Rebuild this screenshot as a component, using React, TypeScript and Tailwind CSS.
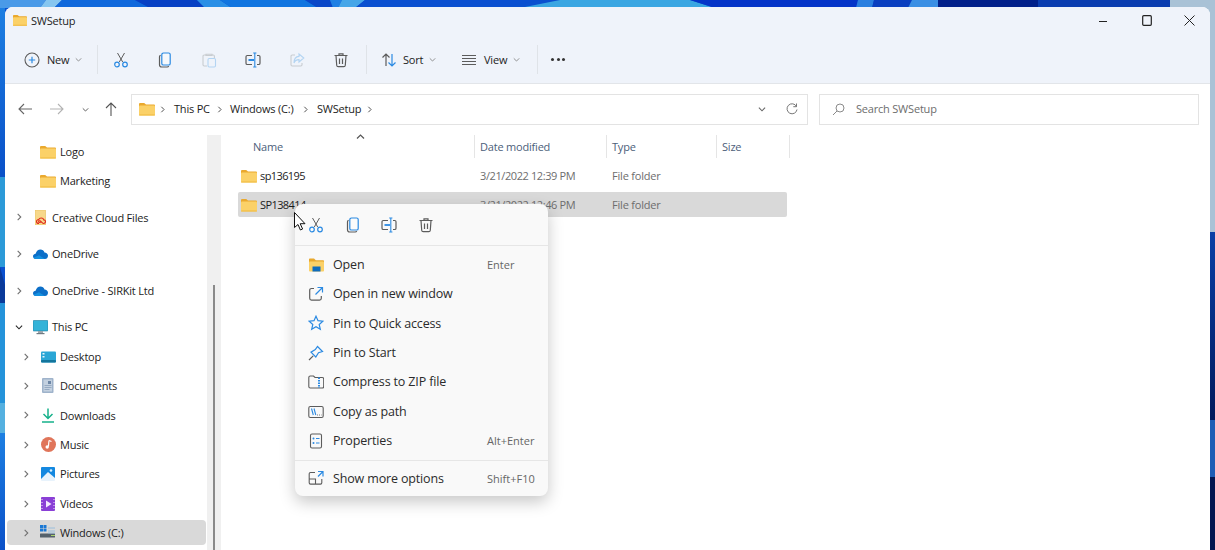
import type { ReactNode } from "react";

const BLUE = "#2b8ae2";
const GRAY = "#5c5c5c";

function Svg({ size = 16, children, className }: { size?: number; children: ReactNode; className?: string }) {
  return (
    <svg width={size} height={size} viewBox="0 0 16 16" fill="none" strokeWidth="1" className={className}>
      {children}
    </svg>
  );
}

function Folder({ w = 16 }: { w?: number }) {
  return (
    <svg width={w} height={(w * 14) / 16} viewBox="0 0 16 14" className="shrink-0">
      <path d="M0 2a1 1 0 0 1 1-1h4.2l1.8 1.6h8a1 1 0 0 1 1 1V6H0z" fill="#eaa92e" />
      <rect x="0" y="3.6" width="16" height="9.9" rx="1" fill="#fbd168" />
      <rect x="0" y="12.4" width="16" height="1.1" rx=".5" fill="#f0b93f" />
    </svg>
  );
}

function Chevron({ dir = "right", color = "#6f6f6f", size = 8 }: { dir?: "right" | "down" | "up"; color?: string; size?: number }) {
  const d = dir === "right" ? "M3 1l3.5 3.5L3 8" : dir === "down" ? "M1 3l3.5 3.5L8 3" : "M1 6.5L4.5 3 8 6.5";
  return (
    <svg width={size} height={size} viewBox="0 0 9 9" fill="none" stroke={color} strokeWidth="1.2">
      <path d={d} />
    </svg>
  );
}

function Cut({ size = 16 }: { size?: number }) {
  return (
    <Svg size={size}>
      <path d="M4.5 1l5.2 9M11.5 1L6.3 10" stroke={GRAY} />
      <circle cx="4" cy="12.5" r="2.3" stroke={BLUE} strokeWidth="1.2" />
      <circle cx="12" cy="12.5" r="2.3" stroke={BLUE} strokeWidth="1.2" />
    </Svg>
  );
}

function Copy({ size = 16 }: { size?: number }) {
  return (
    <Svg size={size}>
      <path d="M3.6 3.2C2.8 3.5 2.5 4 2.5 4.8v8c0 1.2.9 2.2 2.2 2.2h5.5c.7 0 1.2-.3 1.5-.9" stroke={GRAY} strokeWidth="1.2" />
      <rect x="4.8" y="1" width="8.4" height="12" rx="1.6" stroke={BLUE} strokeWidth="1.2" fill="#fff" fillOpacity=".4" />
    </Svg>
  );
}

function Paste() {
  return (
    <Svg>
      <path d="M5 3H3.2C2.5 3 2 3.5 2 4.2v8.6c0 .7.5 1.2 1.2 1.2H6" stroke="#c8ccd0" strokeWidth="1.1" />
      <path d="M5 3.5V2.2h6v1.3zM11 3h1.2c.7 0 1.2.5 1.2 1.2V6" stroke="#c8ccd0" strokeWidth="1.1" />
      <rect x="7" y="6.5" width="7.5" height="8.5" rx="1.2" stroke="#b3d4f2" strokeWidth="1.1" />
    </Svg>
  );
}

function Rename({ size = 16 }: { size?: number }) {
  return (
    <Svg size={size}>
      <path d="M7 3.5H2.3C1.5 3.5 1 4 1 4.8v6.4c0 .8.5 1.3 1.3 1.3H7M12 3.5h1.7c.8 0 1.3.5 1.3 1.3v6.4c0 .8-.5 1.3-1.3 1.3H12" stroke={GRAY} strokeWidth="1.2" />
      <path d="M3.5 8h5.5" stroke={BLUE} strokeWidth="1.8" />
      <path d="M9.8 1v14M8.2 1h3.2M8.2 15h3.2" stroke={BLUE} strokeWidth="1.1" />
    </Svg>
  );
}

function Share() {
  return (
    <Svg>
      <path d="M6 3H3.2C2.5 3 2 3.5 2 4.2v8.6c0 .7.5 1.2 1.2 1.2h8.6c.7 0 1.2-.5 1.2-1.2V11" stroke="#c8ccd0" strokeWidth="1.1" />
      <path d="M10 2l4.8 4L10 10V7.6C7.5 7.6 5.8 8.6 5 11c0-4 2-6.4 5-6.6z" stroke="#b3d4f2" strokeWidth="1.1" />
    </Svg>
  );
}

function Trash({ size = 16 }: { size?: number }) {
  return (
    <Svg size={size}>
      <path d="M1.5 3.5h13M6 3.5V1.8h4v1.7M3 3.5l.7 9.8c.1.9.6 1.4 1.5 1.4h5.6c.9 0 1.4-.5 1.5-1.4l.7-9.8" stroke={GRAY} strokeWidth="1.2" />
      <path d="M6.5 6.5v5.5M9.5 6.5v5.5" stroke={GRAY} strokeWidth="1.2" />
    </Svg>
  );
}

function Desktop() {
  return (
    <svg width="15" height="12" viewBox="0 0 15 12">
      <rect width="15" height="11" y=".5" rx="1" fill="#2aa6d6" />
      <rect width="15" height="2.5" y="9" rx="1" fill="#13759c" />
      <rect x="1.5" y="2" width="2" height="1.5" fill="#e6f6fb" />
      <rect x="1.5" y="5" width="2" height="1.5" fill="#e6f6fb" />
    </svg>
  );
}

function Cloud() {
  return (
    <svg width="15" height="10" viewBox="0 0 15 10">
      <path d="M3 10C1.2 10 0 8.8 0 7.3 0 5.8 1.2 4.8 2.6 4.7 3.3 2 5.3.5 7.4.5c2 0 3.6 1.2 4.1 3 1.9 0 3.5 1.4 3.5 3.2C15 8.7 13.6 10 12 10z" fill="#0c6fc8" />
      <path d="M3 10c-1 0-2-.5-2.5-1.3L6 6.300 12 9.900z" fill="#1490df" />
    </svg>
  );
}

function CreativeCloud() {
  return (
    <svg width="11" height="15" viewBox="0 0 11 15">
      <rect width="10.5" height="15" fill="#f7d88a" stroke="#e5bb58" strokeWidth=".6" />
      <path d="M4 13.5c-1.5 0-2.5-.8-2.5-2s1-2 2.2-1.9c.5-1.1 1.4-1.6 2.5-1.6 1.3 0 2.3.8 2.6 1.9 1 .1 1.7.8 1.7 1.7 0 1.1-.9 1.900-2 1.900-1.700 0-2.500-2.800-3.800-2.800-.7 0-1.100.4-1.100.9s.4.9 1 .9c.4 0 .7-.1 1-.4" fill="none" stroke="#e0261c" strokeWidth="1.1" />
    </svg>
  );
}

function Monitor() {
  return (
    <svg width="15" height="15" viewBox="0 0 15 15">
      <rect y=".5" width="15" height="10.5" rx=".8" fill="#34b3d8" stroke="#1b7a9e" strokeWidth=".6" />
      <rect x="5" y="11" width="5" height="2" fill="#9aa5ad" />
      <rect x="3.5" y="13" width="8" height="1.2" fill="#6f7a82" />
    </svg>
  );
}

function Documents() {
  return (
    <svg width="12" height="15" viewBox="0 0 12 15">
      <rect width="11.5" height="15" rx="1" fill="#9fb3cb" />
      <rect x="1.5" y="1.5" width="8.5" height="12" fill="#c4d1e0" />
      <rect x="6" y="3" width="3" height="3" fill="#6e87a6" />
      <path d="M2.5 7.5h7M2.5 9.5h7M2.5 11.5h5" stroke="#8aa0ba" strokeWidth=".8" />
    </svg>
  );
}

function Downloads() {
  return (
    <svg width="12" height="15" viewBox="0 0 12 15" fill="none" stroke="#16b18a" strokeWidth="1.5">
      <path d="M6 .5V10M1.5 6L6 10.5 10.5 6M0 14h12" />
    </svg>
  );
}

function Music() {
  return (
    <svg width="15" height="15" viewBox="0 0 15 15">
      <circle cx="7.5" cy="7.5" r="7.5" fill="#e0755a" />
      <path d="M8 3.5l-.6 6" stroke="#fff" strokeWidth="1.2" />
      <circle cx="6.2" cy="10" r="1.7" fill="#fff" />
      <path d="M8 3.5l2.5 1" stroke="#fff" strokeWidth="1.2" />
    </svg>
  );
}

function Pictures() {
  return (
    <svg width="14" height="14" viewBox="0 0 14 14">
      <rect width="14" height="14" rx="1" fill="#1488e0" />
      <path d="M0 12l7-7 7 6v3H0z" fill="#ffffff" fillOpacity=".9" />
      <circle cx="10" cy="3.5" r="1.3" fill="#d6efff" />
    </svg>
  );
}

function Videos() {
  return (
    <svg width="14" height="14" viewBox="0 0 14 14">
      <rect width="14" height="14" rx="1" fill="#8a3fd6" />
      <path d="M5 3.5v7L10.5 7z" fill="#f4e9ff" />
      <path d="M1 2v1M1 5v1M1 8v1M1 11v1M13 2v1M13 5v1M13 8v1M13 11v1" stroke="#e2ccf7" strokeWidth="1.2" />
    </svg>
  );
}

function Drive() {
  return (
    <svg width="16" height="15" viewBox="0 0 16 15">
      <rect x="0" y="0" width="3" height="3" fill="#1a78d4" />
      <rect x="3.5" y="0" width="3" height="3" fill="#1a78d4" />
      <rect x="0" y="3.5" width="3" height="3" fill="#1a78d4" />
      <rect x="3.5" y="3.5" width="3" height="3" fill="#1a78d4" />
      <rect x="0" y="8.5" width="15" height="4" rx=".5" fill="#55616b" />
      <path d="M8 3h7M8 6h7M8 8h7" stroke="#8ab8dd" strokeWidth=".8" />
      <rect x="11" y="10" width="4" height="1" fill="#a9d36b" />
    </svg>
  );
}

const menuItems: { label: string; hint?: string; icon: ReactNode }[] = [
  {
    label: "Open",
    hint: "Enter",
    icon: (
      <svg width="15" height="14" viewBox="0 0 15 14">
        <path d="M0 1.5C0 .8.5.5 1 .5h4l1.800 1.800H14c.6 0 1 .4 1 1V5H0z" fill="#e8a82d" />
        <rect y="3.5" width="15" height="10" rx=".8" fill="#fbd168" />
        <rect x="3.5" y="8.5" width="8" height="5" fill="#0f6cbd" />
      </svg>
    ),
  },
  {
    label: "Open in new window",
    icon: (
      <Svg>
        <path d="M6 2.5H3.5c-1 0-1.800.8-1.800 1.800v8c0 1 .8 1.800 1.800 1.800h8c1 0 1.800-.8 1.800-1.800V10" stroke={GRAY} strokeWidth="1.2" />
        <path d="M9.5 1.5h5v5M14.5 1.5L7.5 8.5" stroke={BLUE} strokeWidth="1.2" />
      </Svg>
    ),
  },
  {
    label: "Pin to Quick access",
    icon: (
      <Svg>
        <path d="M8 1.2l2 4.500 4.900.5-3.700 3.300 1.100 4.800L8 11.800 3.700 14.300l1.100-4.800L1.100 6.200 6 5.700z" stroke={BLUE} strokeWidth="1.2" />
      </Svg>
    ),
  },
  {
    label: "Pin to Start",
    icon: (
      <Svg>
        <path d="M9.5 1.5l5 5-4 1.200-2.700 4.300-4.800-4.800 4.300-2.700z" stroke={BLUE} strokeWidth="1.2" />
        <path d="M5.2 10.800L1 15" stroke={GRAY} strokeWidth="1.2" />
      </Svg>
    ),
  },
  {
    label: "Compress to ZIP file",
    icon: (
      <Svg>
        <path d="M.8 3.5c0-1 .6-1.500 1.500-1.500h3.200l1.500 1.500h7.200c1 0 1.500.6 1.500 1.500v7.500c0 1-.6 1.500-1.500 1.500H2.300c-1 0-1.500-.6-1.500-1.500z" stroke={GRAY} strokeWidth="1.1" />
        <path d="M11 3.5V14" stroke={BLUE} strokeWidth="2" strokeDasharray="1.5 1" />
      </Svg>
    ),
  },
  {
    label: "Copy as path",
    icon: (
      <Svg>
        <rect x=".8" y="2.5" width="14.4" height="11" rx="1.5" stroke={GRAY} strokeWidth="1.1" />
        <path d="M3.5 4.5l1.800 6.500M6 4.500l1.800 6.500" stroke={BLUE} strokeWidth="1.1" />
        <path d="M9 11h.8M11 11h.8M13 11h.5" stroke={GRAY} strokeWidth="1" />
      </Svg>
    ),
  },
  {
    label: "Properties",
    hint: "Alt+Enter",
    icon: (
      <Svg>
        <rect x="2.5" y="1" width="11" height="14" rx="1.5" stroke={GRAY} strokeWidth="1.1" />
        <circle cx="5.5" cy="5.5" r="1" fill={BLUE} />
        <circle cx="5.5" cy="10" r="1" fill={BLUE} />
        <path d="M8 5.5h3.5M8 10h3.5" stroke={BLUE} strokeWidth="1.1" />
      </Svg>
    ),
  },
];

const navItems = [
  { label: "Desktop", icon: <Desktop /> },
  { label: "Documents", icon: <Documents /> },
  { label: "Downloads", icon: <Downloads /> },
  { label: "Music", icon: <Music /> },
  { label: "Pictures", icon: <Pictures /> },
  { label: "Videos", icon: <Videos /> },
];

function TopNode({ label, icon, open }: { label: string; icon: ReactNode; open?: boolean }) {
  return (
    <div className="flex h-[29.4px] shrink-0 items-center">
      <div className="flex w-[24px] justify-center">
        <Chevron dir={open ? "down" : "right"} color={open ? "#222" : "#6f6f6f"} />
      </div>
      <div className="flex w-[19px] justify-center">{icon}</div>
      <span className="ml-[2px] whitespace-nowrap pt-px text-[#1c1c1c]">{label}</span>
    </div>
  );
}

function SubNode({ label, icon, selected, arrow = true }: { label: string; icon: ReactNode; selected?: boolean; arrow?: boolean }) {
  return (
    <div className="flex h-[29.4px] shrink-0 items-center">
      <div className={`flex h-[25px] w-full items-center rounded-[4px] ${selected ? "bg-[#d9d9d9]" : ""}`}>
        <div className="flex w-[33px] justify-center pl-[5px]">{arrow && <Chevron />}</div>
        <div className="flex w-[16px] justify-center">{icon}</div>
        <span className="ml-[4px] whitespace-nowrap pt-px text-[#1c1c1c]">{label}</span>
      </div>
    </div>
  );
}

function Row({ name, date, selected }: { name: string; date: string; selected?: boolean }) {
  return (
    <div className={`mb-[4px] grid h-[25px] w-[549px] grid-cols-[236px_132px_110px_71px] items-center rounded-[2px] ${selected ? "bg-[#d9d9d9]" : ""}`}>
      <div className="flex items-center pl-[3px]">
        <Folder />
        <span className="ml-[3px] pt-px tracking-[-0.6px] text-[#1c1c1c]">{name}</span>
      </div>
      <span className="pl-[6px] pt-px tracking-[-0.4px] text-[#6d6d6d]">{date}</span>
      <span className="pl-[6px] pt-px text-[#6d6d6d]">File folder</span>
      <span />
    </div>
  );
}

function MenuRow({ icon, label, hint }: { icon: ReactNode; label: string; hint?: string }) {
  return (
    <div className="flex h-[29.4px] items-center">
      <div className="flex w-[42px] justify-center">{icon}</div>
      <span className="ml-[-4px] w-[154px] whitespace-nowrap pt-px text-[12.5px] tracking-[-0.15px] text-[#2b2b2b]">{label}</span>
      {hint && <span className="whitespace-nowrap pt-px text-[11px] tracking-normal text-[#666]">{hint}</span>}
    </div>
  );
}

export default function App() {
  return (
    <div className="relative h-[550px] w-[1215px] overflow-hidden bg-[#0a50cf] pl-[5px] pt-[7px] font-['Open_Sans',sans-serif] text-[11px] tracking-[-0.2px]">
      {/* wallpaper peeking out around the window */}
      <svg className="absolute inset-0" width="1215" height="550" viewBox="0 0 1215 550">
        <defs>
          <linearGradient id="rs" x1="0" y1="0" x2="0" y2="1">
            <stop offset="0" stopColor="#0a3fa6" />
            <stop offset="1" stopColor="#021a5c" />
          </linearGradient>
          <linearGradient id="ls" x1="0" y1="0" x2="0" y2="1">
            <stop offset="0" stopColor="#1d7fe2" />
            <stop offset="1" stopColor="#0a50c8" />
          </linearGradient>
        </defs>
        <polygon points="0,0 46,0 40,8 0,8" fill="#4a9ae8" />
        <polygon points="46,0 62,0 54,8 40,8" fill="#86c6f0" />
        <polygon points="62,0 135,0 150,8 54,8" fill="#0f68dc" />
        <polygon points="135,0 197,0 205,8 150,8" fill="#0740c4" />
        <polygon points="197,0 220,0 232,8 205,8" fill="#2a8fe6" />
        <polygon points="220,0 305,0 318,8 232,8" fill="#1175e0" />
        <polygon points="305,0 330,0 333,8 318,8" fill="#0a47c8" />
        <polygon points="330,0 342,0 338,8 333,8" fill="#1f80e4" />
        <polygon points="342,0 365,0 355,8 338,8" fill="#46a6e8" />
        <polygon points="365,0 540,0 500,8 355,8" fill="#0a4fd0" />
        <polygon points="560,0 690,0 715,8 520,8" fill="#3aa6e2" />
        <polygon points="690,0 858,0 856,8 715,8" fill="#0434c8" />
        <polygon points="858,0 874,0 872,8 856,8" fill="#2a7fe0" />
        <polygon points="874,0 912,0 908,8 872,8" fill="#0a3fc0" />
        <polygon points="912,0 938,0 938,8 908,8" fill="#3a8fe4" />
        <rect x="938" y="0" width="100" height="8" fill="#01208a" />
        <rect x="1038" y="0" width="132" height="8" fill="#0a3db0" />
        <rect x="1170" y="0" width="45" height="232" fill="#a9c2d6" />
        <rect x="1210" y="232" width="5" height="188" fill="url(#rs)" />
        <rect x="1210" y="420" width="5" height="57" fill="#1f5db5" />
        <rect x="1210" y="477" width="5" height="73" fill="#041650" />
        <rect x="0" y="8" width="5" height="170" fill="url(#ls)" />
        <rect x="0" y="177" width="5" height="90" fill="#2c9ad8" />
        <polygon points="0,267 5,285 5,303 0,303" fill="#0a3a9a" />
        <rect x="0" y="303" width="5" height="100" fill="#2493da" />
        <rect x="0" y="403" width="5" height="30" fill="#55b0e0" />
        <rect x="0" y="433" width="5" height="117" fill="url(#ls)" />
      </svg>

      <div className="relative flex h-[543px] w-[1205px] flex-col overflow-hidden rounded-t-[8px] bg-white">
        <div className="flex h-[27px] shrink-0 items-center bg-[#eff3fa] pl-[8px]">
          <Folder w={14} />
          <span className="ml-[4px] pt-px text-[#1c1c1c]">SWSetup</span>
          <div className="ml-auto flex h-full items-center">
            <div className="flex w-[44px] justify-center">
              <svg width="10" height="10" viewBox="0 0 10 10"><path d="M1 5.5h8" stroke="#222" strokeWidth="1.2" /></svg>
            </div>
            <div className="flex w-[44px] justify-center">
              <svg width="10" height="11" viewBox="0 0 10 11"><rect x=".7" y=".7" width="8.6" height="9.6" rx="1" fill="none" stroke="#222" strokeWidth="1.2" /></svg>
            </div>
            <div className="flex w-[41px] justify-center">
              <svg width="11" height="11" viewBox="0 0 11 11"><path d="M.5.5l10 10M10.5.5l-10 10" stroke="#222" strokeWidth="1" /></svg>
            </div>
          </div>
        </div>

        <div className="flex h-[50px] shrink-0 items-center border-b border-[#e2e5e9] bg-[#eff3fa] pt-[2px]">
          <div className="flex w-[92px] items-center pl-[19px]">
            <Svg>
              <circle cx="8" cy="8" r="7" stroke={GRAY} strokeWidth="1.1" />
              <path d="M8 4.8v6.4M4.8 8h6.4" stroke={BLUE} strokeWidth="1.2" />
            </Svg>
            <span className="ml-[7px] pt-[2px] text-[#1c1c1c]">New</span>
            <span className="ml-[6px]"><Chevron dir="down" color="#8a8a8a" size={7} /></span>
          </div>
          <div className="h-[29px] w-px bg-[#dfe3e8]" />
          <div className="ml-px flex">
            <div className="flex w-11 justify-center"><Cut /></div>
            <div className="flex w-11 justify-center"><Copy /></div>
            <div className="flex w-11 justify-center"><Paste /></div>
            <div className="flex w-11 justify-center"><Rename /></div>
            <div className="flex w-11 justify-center"><Share /></div>
            <div className="flex w-11 justify-center"><Trash /></div>
          </div>
          <div className="ml-[3px] h-[29px] w-px bg-[#dfe3e8]" />
          <div className="flex w-[94px] items-center pl-[14px]">
            <Svg>
              <path d="M5 14V2M1.5 5.5L5 2l3.5 3.500" stroke={GRAY} strokeWidth="1.2" />
              <path d="M11 2v12M7.5 10.5L11 14l3.500-3.500" stroke={BLUE} strokeWidth="1.2" />
            </Svg>
            <span className="ml-[6px] pt-[2px] text-[#1c1c1c]">Sort</span>
            <span className="ml-[6px]"><Chevron dir="down" color="#8a8a8a" size={7} /></span>
          </div>
          <div className="flex w-[76px] items-center">
            <Svg>
              <path d="M1 3.5h14M1 6.5h14M1 9.5h14M1 12.5h14" stroke={GRAY} strokeWidth="1.1" />
            </Svg>
            <span className="ml-[7px] pt-[2px] text-[#1c1c1c]">View</span>
            <span className="ml-[6px]"><Chevron dir="down" color="#8a8a8a" size={7} /></span>
          </div>
          <div className="h-[29px] w-px bg-[#dfe3e8]" />
          <div className="ml-[12px] flex w-[16px] justify-center gap-[2.5px]">
            <span className="h-[3px] w-[3px] rounded-full bg-[#333]" />
            <span className="h-[3px] w-[3px] rounded-full bg-[#333]" />
            <span className="h-[3px] w-[3px] rounded-full bg-[#333]" />
          </div>
        </div>

        <div className="flex h-[46px] shrink-0 items-center pl-[4px] pt-[4px]">
          <div className="flex w-[32px] justify-center">
            <svg width="14" height="12" viewBox="0 0 14 12" fill="none" stroke="#666" strokeWidth="1.1"><path d="M14 6H1M6 1L1 6l5 5" /></svg>
          </div>
          <div className="flex w-[32px] justify-center">
            <svg width="14" height="12" viewBox="0 0 14 12" fill="none" stroke="#b3b3b3" strokeWidth="1.1"><path d="M0 6h13M8 1l5 5-5 5" /></svg>
          </div>
          <div className="flex w-[24px] justify-center"><Chevron dir="down" color="#555" size={7} /></div>
          <div className="flex w-[28px] justify-center">
            <svg width="12" height="14" viewBox="0 0 12 14" fill="none" stroke="#555" strokeWidth="1.1"><path d="M6 14V1M1 6l5-5 5 5" /></svg>
          </div>
          <div className="ml-[6px] flex h-[31px] w-[677px] items-center border-[1.5px] border-[#e3e3e3] pl-[7px]">
            <Folder />
            <span className="ml-[4px]"><Chevron color="#444" size={7} /></span>
            <span className="ml-[8px] w-[36px] whitespace-nowrap text-[#1c1c1c]">This PC</span>
            <span className="ml-[6px]"><Chevron color="#444" size={7} /></span>
            <span className="ml-[7px] w-[66px] whitespace-nowrap text-[#1c1c1c]">Windows (C:)</span>
            <span className="ml-[6px]"><Chevron color="#444" size={7} /></span>
            <span className="ml-[8px] w-[43px] whitespace-nowrap text-[#1c1c1c]">SWSetup</span>
            <span className="ml-[6px]"><Chevron color="#444" size={7} /></span>
            <div className="ml-auto flex items-center">
              <Chevron dir="down" color="#666" />
              <svg className="ml-[20px] mr-[9px]" width="12" height="13" viewBox="0 0 12 13" fill="none" stroke="#777" strokeWidth="1">
                <path d="M10.5 3.5A5 5 0 1 0 11 6.5M10.5 .5v3.200H7.300" />
              </svg>
            </div>
          </div>
          <div className="ml-[11px] flex h-[31px] w-[380px] items-center border-[1.5px] border-[#e3e3e3] pl-[12px] text-[#6d6d6d]">
            <svg width="13" height="13" viewBox="0 0 13 13" fill="none" stroke="#8a8a8a" strokeWidth="1">
              <circle cx="8" cy="5" r="4" />
              <path d="M5 8l-4 4" />
            </svg>
            <span className="ml-[11px]">Search SWSetup</span>
          </div>
        </div>

        <div className="flex min-h-0 flex-1">
          <div className="flex w-[202px] shrink-0 flex-col pl-[2px] pr-px pt-[7px]">
            <SubNode arrow={false} label="Logo" icon={<Folder />} />
            <SubNode arrow={false} label="Marketing" icon={<Folder />} />
            <div className="mt-[7px]"><TopNode label="Creative Cloud Files" icon={<CreativeCloud />} /></div>
            <div className="mt-[7.2px]"><TopNode label="OneDrive" icon={<Cloud />} /></div>
            <div className="mt-[7.2px]"><TopNode label="OneDrive - SIRKit Ltd" icon={<Cloud />} /></div>
            <div className="mt-[7.2px]"><TopNode open label="This PC" icon={<Monitor />} /></div>
            {navItems.map((n) => (
              <SubNode key={n.label} label={n.label} icon={n.icon} />
            ))}
            <SubNode selected label="Windows (C:)" icon={<Drive />} />
          </div>
          <div className="mt-[5px] flex w-[14px] shrink-0 justify-center bg-[#f0f0f0] pt-[150px]">
            <div className="w-[2px] bg-[#8a8a8a]" />
          </div>
          <div className="flex-1 pl-[17px] pt-[5px]">
            <div className="grid h-[23px] w-[552px] grid-cols-[236px_132px_110px_74px] items-center text-[#4c607a]">
              <span className="pl-[15px] pt-[2px]">Name</span>
              <span className="flex h-full items-center border-l border-[#e5e5e5] pl-[5px] pt-[2px]">Date modified</span>
              <span className="flex h-full items-center border-l border-[#e5e5e5] pl-[5px] pt-[2px]">Type</span>
              <span className="flex h-full items-center border-x border-[#e5e5e5] pl-[5px] pt-[2px]">Size</span>
            </div>
            <div className="pt-[5px]">
              <Row name="sp136195" date="3/21/2022 12:39 PM" />
              <Row selected name="SP138414" date="3/21/2022 12:46 PM" />
            </div>
          </div>
        </div>
      </div>

      {/* sort caret in the header */}
      <div className="absolute left-[356px] top-[132px]">
        <Chevron dir="up" color="#555" size={9} />
      </div>

      {/* context menu */}
      <div className="absolute left-[295px] top-[204px] w-[253px] rounded-[8px] bg-[#f9f9f9] shadow-[0_6px_16px_rgba(0,0,0,0.22)]">
        <div className="flex h-[42px] items-center border-b border-[#e6e6e6] pl-[13px]">
          <div className="flex w-[16px] justify-center"><Cut /></div>
          <div className="ml-[20.5px] flex w-[16px] justify-center"><Copy /></div>
          <div className="ml-[20.5px] flex w-[16px] justify-center"><Rename /></div>
          <div className="ml-[20.5px] flex w-[16px] justify-center"><Trash /></div>
        </div>
        <div className="border-b border-[#e6e6e6] py-[4px]">
          {menuItems.map((m) => (
            <MenuRow key={m.label} icon={m.icon} label={m.label} hint={m.hint} />
          ))}
        </div>
        <div className="py-[3px]">
          <MenuRow
            label="Show more options"
            hint="Shift+F10"
            icon={
              <Svg>
                <path d="M7 2.5H2.500c-.8 0-1.300.5-1.300 1.300v9c0 .8.5 1.300 1.300 1.300h10c.8 0 1.300-.5 1.300-1.300V9M1.200 9h6.300v5" stroke={GRAY} strokeWidth="1.1" />
                <path d="M10 1.5h5v5M15 1.5L10 6.5" stroke={BLUE} strokeWidth="1.2" />
              </Svg>
            }
          />
        </div>
      </div>

      {/* mouse pointer */}
      <svg className="absolute left-[294px] top-[212px]" width="12" height="19" viewBox="0 0 12 19">
        <path d="M.5.5v15l3.500-3 2.400 5.500 2.200-1-2.400-5.300h4.800z" fill="#fff" stroke="#111" strokeWidth="1" />
      </svg>
    </div>
  );
}
